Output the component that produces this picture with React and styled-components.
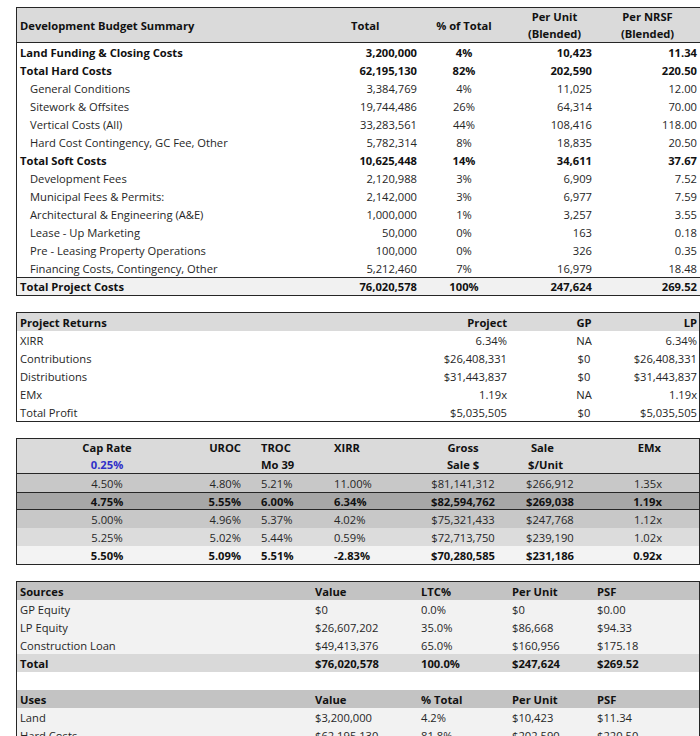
import React from 'react'
import styled, { createGlobalStyle } from 'styled-components'

const GlobalStyle = createGlobalStyle`
  html, body {
    margin: 0;
    background: #fff;
    overflow: hidden;
  }
  body {
    font-family: "Open Sans", "Noto Sans", sans-serif;
    font-size: 11.2px;
    color: #1f1f1f;
  }
`

const LINE = '#262626'

const Sheet = styled.div`
  width: 700px;
  overflow: hidden;
  padding: 7px 0 0 16px;
  box-sizing: border-box;
  display: flex;
  flex-direction: column;
  gap: 16px;
`

const Table = styled.div`
  width: ${p => p.$width}px;
  box-sizing: border-box;
  border: 1px solid ${LINE};
  border-bottom: ${p => (p.$open ? 'none' : `1px solid ${LINE}`)};
  flex-shrink: 0;
`

const Row = styled.div`
  display: grid;
  grid-template-columns: ${p => p.$cols};
  align-items: center;
  box-sizing: border-box;
  height: ${p => p.$h || 18}px;
  background: ${p => p.$bg || 'transparent'};
  font-weight: ${p => (p.$bold ? 700 : 400)};
  color: ${p => (p.$bold ? '#111' : '#262626')};
  border-top: ${p => (p.$lineTop ? `1px solid ${LINE}` : 'none')};
  border-bottom: ${p => (p.$lineBottom ? `1px solid ${LINE}` : 'none')};
`

const Cell = styled.div`
  text-align: ${p => p.$align || 'left'};
  padding: 0 ${p => p.$pr || 0}px 0 ${p => p.$pl || 0}px;
  white-space: nowrap;
  line-height: 17px;
`

const HeadCell = styled(Cell)`
  display: flex;
  flex-direction: column;
  justify-content: ${p => (p.$top ? 'flex-start' : 'center')};
  align-self: stretch;
  font-weight: 700;
  color: #111;
`

const Accent = styled.span`
  color: #2f2fc8;
`

/* ---------- development budget ---------- */

const budgetCols = '324px 80px 86px 89px 105px'

const budgetRows = [
  ['Land Funding & Closing Costs', '3,200,000', '4%', '10,423', '11.34', 'bold'],
  ['Total Hard Costs', '62,195,130', '82%', '202,590', '220.50', 'bold'],
  ['General Conditions', '3,384,769', '4%', '11,025', '12.00', 'sub'],
  ['Sitework & Offsites', '19,744,486', '26%', '64,314', '70.00', 'sub'],
  ['Vertical Costs (All)', '33,283,561', '44%', '108,416', '118.00', 'sub'],
  ['Hard Cost Contingency, GC Fee, Other', '5,782,314', '8%', '18,835', '20.50', 'sub'],
  ['Total Soft Costs', '10,625,448', '14%', '34,611', '37.67', 'bold'],
  ['Development Fees', '2,120,988', '3%', '6,909', '7.52', 'sub'],
  ['Municipal Fees & Permits:', '2,142,000', '3%', '6,977', '7.59', 'sub'],
  ['Architectural & Engineering (A&E)', '1,000,000', '1%', '3,257', '3.55', 'sub'],
  ['Lease - Up Marketing', '50,000', '0%', '163', '0.18', 'sub'],
  ['Pre - Leasing Property Operations', '100,000', '0%', '326', '0.35', 'sub'],
  ['Financing Costs, Contingency, Other', '5,212,460', '7%', '16,979', '18.48', 'sub'],
]

function BudgetTable() {
  return (
    <Table $width={692}>
      <Row $cols={budgetCols} $h={35} $bg="#dadada" $lineBottom $bold>
        <HeadCell $pl={3}>Development Budget Summary</HeadCell>
        <HeadCell $pl={10}>Total</HeadCell>
        <HeadCell $align="center">% of Total</HeadCell>
        <HeadCell $align="center" $pl={6}>
          <span>Per Unit</span>
          <span>(Blended)</span>
        </HeadCell>
        <HeadCell $align="center" $pr={2}>
          <span>Per NRSF</span>
          <span>(Blended)</span>
        </HeadCell>
      </Row>
      {budgetRows.map(([label, total, pct, unit, nrsf, kind]) => (
        <Row key={label} $cols={budgetCols} $bold={kind === 'bold'}>
          <Cell $pl={kind === 'sub' ? 13 : 3}>{label}</Cell>
          <Cell $align="right" $pr={4}>{total}</Cell>
          <Cell $align="center">{pct}</Cell>
          <Cell $align="right" $pr={4}>{unit}</Cell>
          <Cell $align="right" $pr={4}>{nrsf}</Cell>
        </Row>
      ))}
      <Row $cols={budgetCols} $bg="#f1f1f1" $lineTop $bold>
        <Cell $pl={3}>Total Project Costs</Cell>
        <Cell $align="right" $pr={4}>76,020,578</Cell>
        <Cell $align="center">100%</Cell>
        <Cell $align="right" $pr={4}>247,624</Cell>
        <Cell $align="right" $pr={4}>269.52</Cell>
      </Row>
    </Table>
  )
}

/* ---------- project returns ---------- */

const returnCols = '384px 150px 66px 82px'

const returnRows = [
  ['XIRR', '6.34%', 'NA', '6.34%'],
  ['Contributions', '$26,408,331', '$0', '$26,408,331'],
  ['Distributions', '$31,443,837', '$0', '$31,443,837'],
  ['EMx', '1.19x', 'NA', '1.19x'],
  ['Total Profit', '$5,035,505', '$0', '$5,035,505'],
]

function ReturnsTable() {
  return (
    <Table $width={684}>
      <Row $cols={returnCols} $bg="#dadada" $bold>
        <Cell $pl={3}>Project Returns</Cell>
        <Cell $align="right" $pr={44}>Project</Cell>
        <Cell $align="center">GP</Cell>
        <Cell $align="right" $pr={2}>LP</Cell>
      </Row>
      {returnRows.map(([label, project, gp, lp]) => (
        <Row key={label} $cols={returnCols}>
          <Cell $pl={3}>{label}</Cell>
          <Cell $align="right" $pr={44}>{project}</Cell>
          <Cell $align="center">{gp}</Cell>
          <Cell $align="right" $pr={2}>{lp}</Cell>
        </Row>
      ))}
    </Table>
  )
}

/* ---------- cap rate sensitivity ---------- */

const capCols = '180px 48px 86px 80px 104px 86px 65px 33px'

const capRows = [
  { bg: '#c8c8c8', v: ['4.50%', '4.80%', '5.21%', '11.00%', '$81,141,312', '$266,912', '1.35x'] },
  { bg: '#a7a7a7', bold: true, lines: true, v: ['4.75%', '5.55%', '6.00%', '6.34%', '$82,594,762', '$269,038', '1.19x'] },
  { bg: '#c8c8c8', v: ['5.00%', '4.96%', '5.37%', '4.02%', '$75,321,433', '$247,768', '1.12x'] },
  { bg: '#dcdcdc', v: ['5.25%', '5.02%', '5.44%', '0.59%', '$72,713,750', '$239,190', '1.02x'] },
  { bg: '#f3f3f3', bold: true, v: ['5.50%', '5.09%', '5.51%', '-2.83%', '$70,280,585', '$231,186', '0.92x'] },
]

function CapCells({ v }) {
  return (
    <>
      <Cell $align="center">{v[0]}</Cell>
      <Cell $align="right" $pr={4}>{v[1]}</Cell>
      <Cell $pl={16}>{v[2]}</Cell>
      <Cell $pl={3}>{v[3]}</Cell>
      <Cell $align="center">{v[4]}</Cell>
      <Cell $pl={11}>{v[5]}</Cell>
      <Cell $align="right" $pr={4}>{v[6]}</Cell>
      <Cell />
    </>
  )
}

function CapRateTable() {
  return (
    <Table $width={684}>
      <Row $cols={capCols} $h={35} $bg="#dadada" $lineBottom>
        <HeadCell $align="center">
          <span>Cap Rate</span>
          <Accent>0.25%</Accent>
        </HeadCell>
        <HeadCell $align="right" $pr={4} $top>UROC</HeadCell>
        <HeadCell $pl={16}>
          <span>TROC</span>
          <span>Mo 39</span>
        </HeadCell>
        <HeadCell $pl={3} $top>XIRR</HeadCell>
        <HeadCell $align="center">
          <span>Gross</span>
          <span>Sale $</span>
        </HeadCell>
        <HeadCell $pl={13}>
          <span>&nbsp;Sale</span>
          <span>$/Unit</span>
        </HeadCell>
        <HeadCell $align="right" $pr={5} $top>EMx</HeadCell>
        <HeadCell />
      </Row>
      {capRows.map(r => (
        <Row
          key={r.v[0]}
          $cols={capCols}
          $bg={r.bg}
          $bold={r.bold}
          $lineTop={r.lines}
          $lineBottom={r.lines}
        >
          <CapCells v={r.v} />
        </Row>
      ))}
    </Table>
  )
}

/* ---------- sources & uses ---------- */

const suCols = '295px 106px 91px 85px 105px'

function SuRow({ cells, bg, bold }) {
  return (
    <Row $cols={suCols} $bg={bg} $bold={bold}>
      {cells.map((c, i) => (
        <Cell key={i} $pl={3}>{c}</Cell>
      ))}
    </Row>
  )
}

function SourcesUsesTable() {
  return (
    <Table $width={684} $open>
      <SuRow bg="#c3c3c3" bold cells={['Sources', 'Value', 'LTC%', 'Per Unit', 'PSF']} />
      <SuRow bg="#f2f2f2" cells={['GP Equity', '$0', '0.0%', '$0', '$0.00']} />
      <SuRow bg="#f2f2f2" cells={['LP Equity', '$26,607,202', '35.0%', '$86,668', '$94.33']} />
      <SuRow bg="#f2f2f2" cells={['Construction Loan', '$49,413,376', '65.0%', '$160,956', '$175.18']} />
      <SuRow bg="#d9d9d9" bold cells={['Total', '$76,020,578', '100.0%', '$247,624', '$269.52']} />
      <SuRow bg="#fff" cells={['', '', '', '', '']} />
      <SuRow bg="#c3c3c3" bold cells={['Uses', 'Value', '% Total', 'Per Unit', 'PSF']} />
      <SuRow bg="#f2f2f2" cells={['Land', '$3,200,000', '4.2%', '$10,423', '$11.34']} />
      <SuRow bg="#f2f2f2" cells={['Hard Costs', '$62,195,130', '81.8%', '$202,590', '$220.50']} />
    </Table>
  )
}

export default function App() {
  return (
    <>
      <GlobalStyle />
      <Sheet>
        <BudgetTable />
        <ReturnsTable />
        <CapRateTable />
        <SourcesUsesTable />
      </Sheet>
    </>
  )
}
